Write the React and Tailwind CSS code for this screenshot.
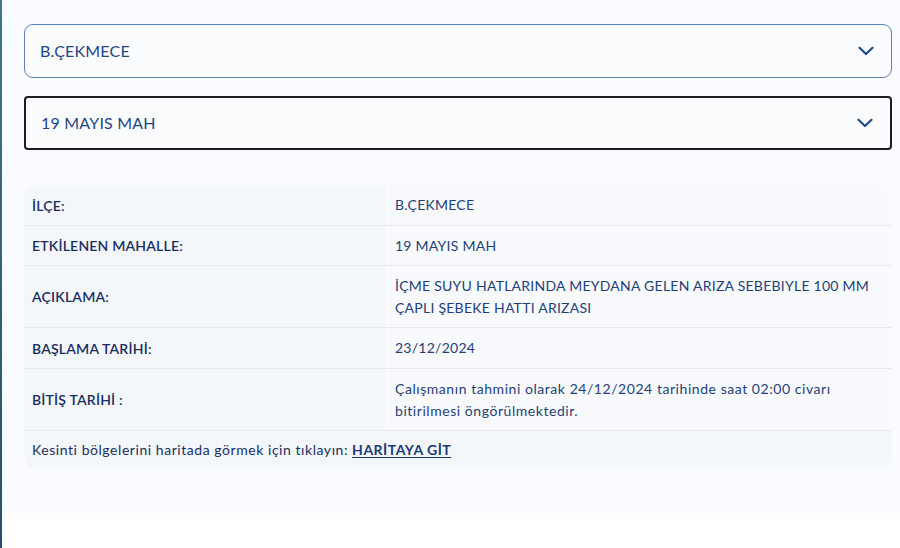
import React from "react";

const rows = [
  { label: "İLÇE:", value: "B.ÇEKMECE", h: "h-[40px]" },
  { label: "ETKİLENEN MAHALLE:", value: "19 MAYIS MAH", h: "h-[40px]" },
  {
    label: "AÇIKLAMA:",
    value: "İÇME SUYU HATLARINDA MEYDANA GELEN ARIZA SEBEBIYLE 100 MM ÇAPLI ŞEBEKE HATTI ARIZASI",
    h: "h-[62px]",
  },
  { label: "BAŞLAMA TARİHİ:", value: "23/12/2024", h: "h-[41px]" },
  {
    label: "BİTİŞ TARİHİ :",
    value: "Çalışmanın tahmini olarak 24/12/2024 tarihinde saat 02:00 civarı bitirilmesi öngörülmektedir.",
    h: "h-[62px]",
    mixed: true,
  },
];

function Chevron() {
  return (
    <svg width="16" height="10" viewBox="0 0 16 10" fill="none">
      <path d="M1.5 1.8 L8 8 L14.5 1.8" stroke="#1d4a8a" strokeWidth="2.2" strokeLinecap="round" strokeLinejoin="round" />
    </svg>
  );
}

function Select({ value, active }) {
  return (
    <div
      className={
        "flex h-[54px] items-center justify-between pl-[15px] pr-[17px] bg-[#fbfcfe] " +
        (active
          ? "border-2 border-[#1b1d21] rounded-[4px]"
          : "border-[1.5px] border-[#5f82bd] rounded-[9px]")
      }
    >
      <span className="text-[16px] text-[#1f4683] tracking-[0.2px]">{value}</span>
      <Chevron />
    </div>
  );
}

export default function App() {
  return (
    <div className="flex w-[900px] h-[548px] bg-white font-['Lato',sans-serif]">
      <div className="w-[2px] h-full bg-gradient-to-b from-[#3f7a7c] to-[#2e4a68]" />
      <div className="flex-1 flex flex-col">
        <div className="h-[513px] bg-[#f9fbfe] pl-[22px] pr-[8px] pt-[24px] flex flex-col">
          <Select value="B.ÇEKMECE" />
          <div className="h-[18px]" />
          <Select value="19 MAYIS MAH" active />
          <div className="mt-[35px] rounded-[12px] overflow-hidden bg-[#f8fafd] text-[14px] text-[#1c3466]">
            {rows.map((r, i) => (
              <div
                key={r.label}
                className={"flex " + r.h + (i > 0 ? " border-t-[1.5px] border-[#e6e9ef]" : "")}
              >
                <div className="w-[361px] shrink-0 bg-[#f3f6fb] flex items-center pl-[8px] font-semibold tracking-[0.2px] text-[#1b2f5f]">
                  {r.label}
                </div>
                <div
                  className={
                    "flex-1 flex items-center pl-[10px] pr-[17px] leading-[22px] text-[#1f4079] " +
                    (r.mixed ? "tracking-[0.55px]" : "tracking-[0.25px]")
                  }
                >
                  {r.value}
                </div>
              </div>
            ))}
            <div className="h-[38px] flex items-center pl-[8px] bg-[#f3f6fb] border-t-[1.5px] border-[#e6e9ef] text-[#1b2f5f]">
              <span className="tracking-[0.55px]">Kesinti bölgelerini haritada görmek için tıklayın:&nbsp;</span>
              <a className="font-bold underline underline-offset-2 tracking-[0.5px] text-[#1b3a75]">HARİTAYA GİT</a>
            </div>
          </div>
        </div>
      </div>
    </div>
  );
}
